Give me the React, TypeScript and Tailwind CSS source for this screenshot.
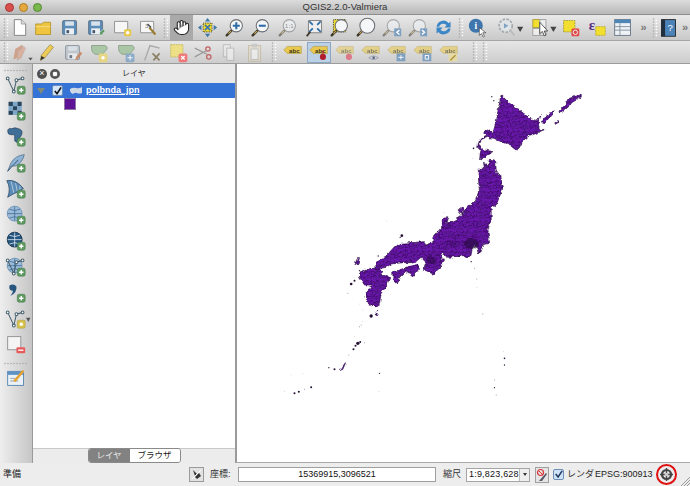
import React from 'react';
import { Hand } from 'lucide-react';

const jp = { fontFamily: '"Liberation Sans", "Noto Sans CJK JP", sans-serif' };

const Ico: React.FC<{ children: React.ReactNode; w?: number }> = ({ children, w = 24 }) => (
  <svg width={w * 0.88} height="21" viewBox={`0 0 ${w} 24`} className="shrink-0">{children}</svg>
);

const Slot: React.FC<{ w?: number; children?: React.ReactNode; className?: string }> = ({ w = 26, children, className = '' }) => (
  <div className={`flex items-center justify-center shrink-0 ${className}`} style={{ width: w }}>{children}</div>
);

const Grip: React.FC = () => (
  <svg width="6" height="20" viewBox="0 0 6 20" className="shrink-0">
    {[1, 4, 7, 10, 13, 16, 19].map(y => (
      <g key={y}><circle cx="1.5" cy={y} r="0.8" fill="#a8a8a8" /><circle cx="4.5" cy={y - 1.5} r="0.8" fill="#fff" /></g>
    ))}
  </svg>
);

const Plus: React.FC<{ x?: number; y?: number }> = ({ x = 14, y = 14 }) => (
  <g>
    <rect x={x} y={y} width="9" height="9" rx="2" fill="#5f9a63" stroke="#3f7444" strokeWidth=".6" />
    <path d={`M${x + 4.5} ${y + 2}v5M${x + 2} ${y + 4.5}h5`} stroke="#fff" strokeWidth="1.6" />
  </g>
);

const Floppy: React.FC<{ c?: string; o?: number }> = ({ c = '#5b8db8', o = 1 }) => (
  <g opacity={o}>
    <rect x="4" y="4" width="16" height="16" rx="1.5" fill={c} stroke="#46596b" strokeWidth=".7" />
    <rect x="7" y="5" width="10" height="5" fill="#d8e2ea" />
    <rect x="7" y="13" width="10" height="7" fill="#eef1f3" />
    <rect x="8.5" y="15" width="3" height="3.5" fill="#46596b" />
  </g>
);

const Page: React.FC<{ o?: number }> = ({ o = 1 }) => (
  <path d="M4 5h15v13H4z" fill="#f6f6f6" stroke="#8a8a8a" opacity={o} />
);

const Mag: React.FC<{ children?: React.ReactNode; o?: number; big?: boolean }> = ({ children, o = 1, big }) => (
  <g opacity={o}>
    <path d="M9 15L3 21" stroke="#3b3425" strokeWidth="2.6" strokeLinecap="round" />
    <path d="M8 16L5 19" stroke="#d9b65a" strokeWidth="1.2" />
    <circle cx="14" cy="10" r={big ? 8.5 : 7} fill="#f4f6f8" stroke="#6b6f73" strokeWidth="1.2" />
    {children}
  </g>
);

const Toolbar1: React.FC = () => (
  <div className="h-[26px] flex items-center pl-[3px] bg-linear-to-b from-[#e9e9e9] to-[#c9c9c9] border-b border-[#a5a5a5]">
    <Grip />
    <Slot w={22}><Ico><path d="M6 3h8l5 5v13H6z" fill="#fff" stroke="#777" /><path d="M14 3v5h5" fill="#ddd" stroke="#999" /></Ico></Slot>
    <Slot><Ico><path d="M3 8h7l2-2h8v14H3z" fill="#efc53f" stroke="#b5922c" /><path d="M3 11h17" stroke="#f8e08c" /></Ico></Slot>
    <Slot><Ico><Floppy /></Ico></Slot>
    <Slot><Ico><Floppy /><path d="M16 21l1-4 4-3 2 2-4 4z" fill="#5f9a63" stroke="#fff" strokeWidth=".5" /></Ico></Slot>
    <Slot><Ico><Page /><rect x="15" y="14" width="8" height="8" rx="1.5" fill="#e8c94b" /><circle cx="19" cy="18" r="2" fill="#fff" /></Ico></Slot>
    <Slot><Ico><Page /><text x="9" y="13" fontSize="7" fill="#777">3</text><path d="M14 12l7 8" stroke="#9a7b2b" strokeWidth="2.4" /><path d="M12 8l4 4" stroke="#444" strokeWidth="1.4" /></Ico></Slot>
    <Slot w={6} className="ml-[2px]"><Grip /></Slot>
    <Slot w={23} className="h-[25px] bg-[#a9a9a9] ml-[1px]"><Hand size={17} fill="#fff" color="#222" strokeWidth={1.5} /></Slot>
    <Slot w={29}><Ico><rect x="7" y="7" width="10" height="10" fill="#f2de2e" stroke="#222" strokeDasharray="1 1" /><path d="M12 1l3 4H9zM12 23l3-4H9zM1 12l4-3v6zM23 12l-4-3v6z" fill="#3e76a8" /><path d="M9 9l6 6M15 9l-6 6" stroke="#3e76a8" strokeWidth="2" /></Ico></Slot>
    <Slot><Ico><Mag><path d="M14 6v8M10 10h8" stroke="#2f6da6" strokeWidth="2.4" /></Mag></Ico></Slot>
    <Slot><Ico><Mag><path d="M10 10h8" stroke="#2f6da6" strokeWidth="2.4" /></Mag></Ico></Slot>
    <Slot w={28}><Ico><Mag o={0.55}><text x="14" y="12.5" fontSize="7" fill="#555" textAnchor="middle" style={jp}>1:1</text></Mag></Ico></Slot>
    <Slot w={25}><Ico><path d="M5 4h15v14H5z" fill="#eee" stroke="#777" /><path d="M6 5l4 4M19 5l-4 4M6 17l4-4M19 17l-4-4" stroke="#2f6da6" strokeWidth="2" /><path d="M7 17l-4 5" stroke="#3b3425" strokeWidth="2" /></Ico></Slot>
    <Slot w={26}><Ico><rect x="5" y="3" width="14" height="14" fill="#f2de2e" stroke="#222" strokeDasharray="1 1" /><Mag /></Ico></Slot>
    <Slot w={26}><Ico><Mag big /></Ico></Slot>
    <Slot w={26}><Ico><Mag o={0.5} /><rect x="15" y="13" width="8" height="9" fill="#7d9fc0" /><path d="M21 15l-3 2.5 3 2.5" stroke="#fff" fill="none" strokeWidth="1.5" /></Ico></Slot>
    <Slot w={26}><Ico><Mag o={0.5} /><rect x="15" y="13" width="8" height="9" fill="#7d9fc0" /><path d="M17 15l3 2.5-3 2.5" stroke="#fff" fill="none" strokeWidth="1.5" /></Ico></Slot>
    <Slot w={26}><Ico><path d="M4 11a8 8 0 0 1 14-4l2-2v7h-7l2.500-2.500A5 5 0 0 0 7 11z" fill="#3b86c6" /><path d="M20 13a8 8 0 0 1-14 4l-2 2v-7h7l-2.500 2.500A5 5 0 0 0 17 13z" fill="#3b86c6" /></Ico></Slot>
    <Slot w={8}><Grip /></Slot>
    <Slot w={26}><Ico><circle cx="10" cy="10" r="8" fill="#3f76ad" /><text x="10" y="14" fontSize="11" fontWeight="700" fill="#fff" textAnchor="middle" style={{ fontFamily: '"Liberation Serif", serif' }}>i</text><path d="M14 12v9l2.500-2 2 4 1.500-1-2-4h3.500z" fill="#fff" stroke="#333" strokeWidth=".7" /></Ico></Slot>
    <Slot w={34} className="pl-[4px]">
      <Ico w={32}><circle cx="11" cy="10" r="7.500" fill="#dfe3e6" stroke="#a5abb0" strokeWidth="2" strokeDasharray="3 1.500" /><path d="M9 7l5 3-5 3z" fill="#7da2c4" /><path d="M16 15l5 6" stroke="#bbb" strokeWidth="2" /><path d="M24 11h7l-3.500 6z" fill="#444" /></Ico>
    </Slot>
    <Slot w={32} className="pl-[6px]">
      <Ico w={30}><rect x="2" y="3" width="8" height="9" fill="#f2de2e" stroke="#a59a35" /><rect x="10" y="3" width="7" height="9" fill="#eee" stroke="#999" /><rect x="2" y="13" width="8" height="8" fill="#eee" stroke="#999" /><rect x="10" y="13" width="7" height="8" fill="#ddd" stroke="#999" /><path d="M10 6v13l3-2.500 2 5 2-1-2-4.500h4z" fill="#fff" stroke="#222" strokeWidth=".8" /><path d="M22 11h7l-3.500 6z" fill="#444" /></Ico>
    </Slot>
    <Slot w={27}><Ico><rect x="4" y="4" width="13" height="13" fill="#f2de2e" stroke="#a59a35" strokeDasharray="2 1" /><rect x="13" y="13" width="9" height="9" rx="1.500" fill="#df4a4a" /><circle cx="17.500" cy="17.500" r="2.500" fill="none" stroke="#fff" /></Ico></Slot>
    <Slot w={26}><Ico><text x="3" y="15" fontSize="17" fill="#5c2e82" fontWeight="700" style={{ fontFamily: '"Liberation Serif", serif' }}>ε</text><rect x="11" y="11" width="11" height="10" fill="#f2de2e" stroke="#b7a93a" strokeDasharray="2 1" /></Ico></Slot>
    <Slot w={25}><Ico><rect x="3" y="3" width="18" height="18" fill="#eef2f5" stroke="#607080" /><rect x="3" y="3" width="18" height="4" fill="#4f86b8" /><path d="M3 11h18M3 15h18M9 7v14" stroke="#7d8d9b" /></Ico></Slot>
    <Slot w={17} className="text-[11px] text-[#777] font-bold">»</Slot>
    <Slot w={6}><Grip /></Slot>
    <Slot w={22}><Ico><rect x="4" y="3" width="16" height="19" fill="#4b83b8" stroke="#222" /><rect x="4" y="3" width="4" height="19" fill="#1f2f40" /><text x="14" y="16" fontSize="11" fill="#fff" textAnchor="middle" style={jp}>?</text></Ico></Slot>
    <Slot w={10} className="text-[11px] text-[#777] font-bold">»</Slot>
  </div>
);

const Label: React.FC<{ children?: React.ReactNode; o?: number }> = ({ children, o = 1 }) => (
  <Ico>
    <g opacity={o}>
      <path d="M2 9l4-4h16v8H6z" fill="#e8c84f" stroke="#a78d2f" strokeWidth=".6" />
      <text x="14" y="12" fontSize="7" fontWeight="700" fill="#3a3318" textAnchor="middle" style={jp}>abc</text>
    </g>
    {children}
  </Ico>
);

const Toolbar2: React.FC = () => (
  <div className="h-[23px] flex items-center pl-[3px] bg-linear-to-b from-[#e6e6e6] to-[#cdcdcd] border-b border-[#9c9c9c]">
    <Grip />
    <Slot w={24}><Ico w={28}><g opacity=".7"><path d="M5 20l2-12 8-5 1 2-5 12z" fill="#c98b6a" /><path d="M9 21l1-10 7-6 2 2-5 11z" fill="#d8a088" stroke="#999" strokeWidth=".4" /></g><path d="M22 18h5l-2.500 3z" fill="#555" /></Ico></Slot>
    <Slot w={24} className="ml-[2px]"><Ico><path d="M5 21l1-6 10-12 4 3L10 18z" fill="#eecb56" stroke="#8a7a40" strokeWidth=".7" /><path d="M5 21l1-5 4 2z" fill="#333" /></Ico></Slot>
    <Slot w={28}><Ico><Floppy c="#b8c0c7" o={0.75} /><path d="M15 21l1-4 5-6 2 2-5 6z" fill="#c98b6a" /></Ico></Slot>
    <Slot w={26}><Ico><path d="M3 4h14c5 0 4 5 2 6s-2 4-4 4H8C4 14 2 8 3 4z" fill="#a9c7a6" stroke="#8a9e88" /><rect x="11" y="13" width="10" height="10" rx="1.500" fill="#e6d583" /><circle cx="16" cy="18" r="2" fill="#fff" /></Ico></Slot>
    <Slot w={27}><Ico><path d="M3 4h14c5 0 4 5 2 6s-2 4-4 4H8C4 14 2 8 3 4z" fill="#a9c7a6" stroke="#8a9e88" /><rect x="11" y="13" width="10" height="10" rx="1.500" fill="#8cabc8" /><path d="M13 18h6M16 15v6" stroke="#fff" /></Ico></Slot>
    <Slot w={26}><Ico><path d="M3 21L9 4l11 3" fill="none" stroke="#a6a6a6" strokeWidth="1.500" /><path d="M12 13l8 8M20 13l-7 8" stroke="#8a7e64" strokeWidth="1.800" /></Ico></Slot>
    <Slot w={26}><Ico><rect x="3" y="3" width="14" height="14" fill="#ecdf85" stroke="#c5b95c" strokeDasharray="2 1" /><rect x="12" y="13" width="10" height="10" rx="2" fill="#e77" /><path d="M15 16l4 4M19 16l-4 4" stroke="#fff" strokeWidth="1.500" /></Ico></Slot>
    <Slot w={24}><Ico><circle cx="17" cy="8" r="2.500" fill="none" stroke="#c06060" strokeWidth="1.400" /><circle cx="18" cy="17" r="2.500" fill="none" stroke="#c06060" strokeWidth="1.400" /><path d="M2 7l14 7M2 17l13-7" stroke="#999" strokeWidth="1.400" /></Ico></Slot>
    <Slot w={26}><Ico><g opacity=".55"><path d="M6 3h8v14H6z" fill="#eee" stroke="#999" /><path d="M10 7h8v14h-8z" fill="#f6f6f6" stroke="#999" /></g></Ico></Slot>
    <Slot w={26}><Ico><g opacity=".6"><rect x="5" y="4" width="14" height="18" fill="#e7dcc4" stroke="#b5a88a" /><rect x="8" y="8" width="8" height="12" fill="#f7f7f7" stroke="#aaa" /><rect x="9" y="2" width="6" height="4" fill="#bbb" /></g></Ico></Slot>
    <Slot w={12}><Grip /></Slot>
    <Slot w={25}><Label /></Slot>
    <Slot w={27}><div className="w-[24px] h-[21px] flex items-center justify-center bg-[#bcd0e6] border border-[#8aa7c7] overflow-hidden"><Label><circle cx="17" cy="17" r="3.500" fill="#b01e2e" /><path d="M17 13v-3" stroke="#b01e2e" strokeWidth="1.500" /></Label></div></Slot>
    <Slot w={26}><Label o={0.5}><circle cx="17" cy="17" r="3.500" fill="#d78" /></Label></Slot>
    <Slot w={26}><Label o={0.6}><path d="M10 18q5-4 11 0q-6 4-11 0z" fill="#cdd8e2" stroke="#778" strokeWidth=".6" /><circle cx="15.500" cy="18" r="1.500" fill="#567" /></Label></Slot>
    <Slot w={26}><Label o={0.6}><rect x="12" y="13" width="10" height="9" fill="#7d9fc0" /><path d="M14 17.500h6M17 15v5" stroke="#fff" /></Label></Slot>
    <Slot w={26}><Label o={0.6}><rect x="12" y="13" width="10" height="9" fill="#7d9fc0" /><rect x="15" y="15.500" width="4" height="4" fill="none" stroke="#fff" /></Label></Slot>
    <Slot w={26}><Label o={0.6}><rect x="12" y="13" width="10" height="9" fill="#e5d9a5" /><path d="M14 21l6-6" stroke="#a68b2c" strokeWidth="1.500" /></Label></Slot>
    <Slot w={12} className="ml-[7px]"><Grip /></Slot>
    <Slot w={8}><Grip /></Slot>
  </div>
);

const HGrip: React.FC = () => (
  <svg width="24" height="5" viewBox="0 0 24 5" className="shrink-0">
    {[1, 4, 7, 10, 13, 16, 19, 22].map(x => <circle key={x} cx={x} cy="2.500" r=".8" fill="#a8a8a8" />)}
  </svg>
);

const Globe: React.FC<{ dark?: boolean }> = ({ dark }) => (
  <g>
    <circle cx="11" cy="11" r="8.500" fill={dark ? '#24557f' : '#9dbbd8'} stroke={dark ? '#15324c' : '#6e93b5'} />
    <path d="M3 11h16M11 3v16M5 6q6 3 12 0M5 16q6-3 12 0" stroke={dark ? '#e6eef5' : '#3f6d96'} fill="none" strokeWidth=".9" />
  </g>
);

const VNode: React.FC = () => (
  <g fill="none" stroke="#46606f" strokeWidth="1.200">
    <path d="M3 5l7 15 3-13 7-2" />
    <circle cx="3" cy="5" r="1.600" fill="#fff" /><circle cx="10" cy="20" r="1.600" fill="#fff" /><circle cx="13" cy="7" r="1.600" fill="#fff" /><circle cx="20" cy="5" r="1.600" fill="#fff" />
  </g>
);

const LeftToolbar: React.FC = () => (
  <div className="w-[33px] shrink-0 flex flex-col items-center bg-linear-to-r from-[#eeeeee] to-[#c6c6c6] border-r border-[#9a9a9a] pt-[4px]">
    <HGrip />
    <div className="flex flex-col items-center gap-[5px] pt-[1px]">
      <Ico><VNode /><Plus /></Ico>
      <Ico><g fill="#27445f"><rect x="4" y="2" width="5" height="5" /><rect x="14" y="2" width="5" height="5" /><rect x="9" y="7" width="5" height="5" /><rect x="4" y="12" width="5" height="5" /><rect x="14" y="12" width="5" height="5" /></g><g fill="#7ea6c9"><rect x="9" y="2" width="5" height="5" /><rect x="4" y="7" width="5" height="5" /><rect x="14" y="7" width="5" height="5" /><rect x="9" y="12" width="5" height="5" /></g><Plus /></Ico>
      <Ico><path d="M3 6q0-4 5-3 3-2 7 0 6 1 4 7-2 4-4 5l-1 4-3-2V10H7Q3 10 3 6z" fill="#3f6f99" stroke="#1f3a52" strokeWidth=".7" /><Plus /></Ico>
      <Ico><path d="M3 22L7 12Q12 4 22 3 20 12 12 16L7 16z" fill="#8fb3d4" stroke="#335a7c" strokeWidth=".7" /><path d="M3 22L15 9" stroke="#2e4f6d" /><Plus /></Ico>
      <Ico><path d="M2 3q10-2 19 9l-5 3Q9 18 3 22 7 12 2 3z" fill="#5d8cb7" stroke="#1e3f5c" strokeWidth=".8" /><path d="M7 4l3 13M12 6l2 9M17 9l0 5" stroke="#cfe0ee" strokeWidth=".8" /><Plus /></Ico>
      <Ico><Globe /><Plus /></Ico>
      <Ico><Globe dark /><Plus /></Ico>
      <Ico><Globe /><VNode /><Plus /></Ico>
      <Ico><path d="M5 4q5-3 8 1 1 7-7 11 3-3 3-6-5 0-4-6z" fill="#27557d" /><Plus /></Ico>
      <div className="pl-[5px]"><Ico w={30}><VNode /><rect x="14" y="14" width="9" height="9" rx="1.500" fill="#d8c34a" stroke="#a89a3a" strokeWidth=".6" /><circle cx="18.500" cy="18.500" r="2" fill="#fff" /><path d="M24 11h5l-2.500 5z" fill="#555" /></Ico></div>
      <Ico><rect x="3" y="3" width="15" height="15" fill="#f4f4f4" stroke="#8c8c8c" /><rect x="13" y="15" width="10" height="7" rx="1.500" fill="#e75a5a" /><path d="M15 18.500h6" stroke="#fff" strokeWidth="1.500" /></Ico>
    </div>
    <div className="mt-[6px]"><HGrip /></div>
    <div className="mt-[1px]">
      <Ico><rect x="3" y="5" width="18" height="16" fill="#eaf1f7" stroke="#4f80ad" /><rect x="3" y="5" width="18" height="4" fill="#5d93c4" /><path d="M6 13h6M6 16h9" stroke="#8a9ba9" /><path d="M9 16L20 3l2 2-10 12z" fill="#e7a434" /></Ico>
    </div>
  </div>
);

const LayerPanel: React.FC = () => (
  <div className="w-[202px] shrink-0 flex flex-col bg-white">
    <div className="h-[19px] flex items-center pl-[2px] bg-[#e9e9e9]">
      <div className="w-[10px] h-[10px] rounded-full bg-[#4f4f4f] flex items-center justify-center text-white text-[9px] leading-none ml-[2px]">×</div>
      <div className="w-[10px] h-[10px] rounded-full bg-[#6a6a6a] border-2 border-[#555] ml-[3px] flex items-center justify-center">
        <div className="w-[4px] h-[4px] bg-white rounded-[1px]" />
      </div>
      <div className="flex-1 text-center text-[8px] text-[#333] pr-[27px] whitespace-nowrap" style={jp}>レイヤ</div>
    </div>
    <div className="h-[15px] flex items-center bg-[#3673d6]">
      <div className="ml-[4px] w-0 h-0 border-x-[4px] border-x-transparent border-t-[6px] border-t-[#7f8a78]" />
      <div className="ml-[7px] w-[11px] h-[11px] rounded-[2px] bg-[#d5e5f8] border border-[#6d8fb8] flex items-center justify-center">
        <svg width="10" height="10" viewBox="0 0 10 10"><path d="M2 5l2.500 3L9 1" stroke="#111" strokeWidth="1.800" fill="none" /></svg>
      </div>
      <svg width="14" height="10" viewBox="0 0 14 10" className="ml-[6px]"><path d="M1 3q3-2 6-1t6-1v6q-3 1-5 0t-4 1Q2 8 1 5z" fill="#cfd9e6" /></svg>
      <span className="ml-[3px] text-[9px] font-bold text-white underline leading-none" style={jp}>polbnda_jpn</span>
    </div>
    <div className="pl-[31px] flex-1">
      <div className="w-[12px] h-[12px] bg-[#5f1296] border border-[#8d7aa0]" />
    </div>
    <div className="h-[15px] bg-[#ececec] border-t border-[#c8c8c8] flex justify-center">
      <div className="flex h-[15px] -mt-px text-[8.500px] leading-[13px] rounded-[3px] overflow-hidden border border-[#8a8a8a] whitespace-nowrap" style={jp}>
        <div className="w-[41px] text-center bg-[#828282] text-[#e8e8e8]">レイヤ</div>
        <div className="w-[50px] text-center bg-white text-[#222]">ブラウザ</div>
      </div>
    </div>
  </div>
);

const holes: [number, number, number][] = [
  [235, 790, 5], [228, 797, 3], [242, 786, 3], [148, 863, 2], [165, 868, 3], [222, 808, 3], [208, 825, 1.5], [255, 788, 1.5],
  [240, 740, 1.5], [245, 735, 1.5], [250, 725, 1], [225, 770, 1], [240, 672, 1], [255, 650, 1.5], [250, 690, 1], [270, 690, 1],
  [275, 708, 5], [45, 940, 3], [58, 935, 3], [95, 922, 3], [75, 928, 1.5], [35, 885, 1], [15, 935, 1], [70, 880, 1], [300, 880, 2],
  [298, 935, 1], [675, 835, 2.5], [675, 855, 2], [673, 815, 1], [645, 900, 1.5], [645, 923, 2], [650, 945, 1.5], [575, 545, 2],
  [585, 565, 1.5], [592, 597, 1.5], [592, 622, 1], [610, 702, 1.5], [215, 612, 4], [225, 602, 3], [205, 640, 1.5], [637, 50, 2],
  [643, 62, 2], [648, 97, 1], [582, 205, 2.5], [578, 235, 1], [367, 467, 4], [362, 472, 2], [322, 423, 1], [493, 397, 1], [240, 572, 2], [296, 528, 2],
];

const JapanMap: React.FC = () => (
  <svg viewBox="238 64 452 398" className="w-full h-full block blur-[0.3px]">
    <defs>
      <pattern id="muni" width="34" height="30" patternUnits="userSpaceOnUse">
        <rect width="34" height="30" fill="#6a14ac" />
        <path d="M0 6L7 3 14 8 22 4 34 7M7 3V0M14 8l-2 9 8 3 9-4 5 1M14 8l6 3 2-7M20 20l-3 10M12 17L3 14 0 18M3 14L7 3M29 16l-3-9M3 14l2 9 12 0M5 23L0 26M29 16l-1 8-8 6M28 24l6 1" fill="none" stroke="#2f0c50" strokeWidth="1.600" />
      </pattern>
      <filter id="rough" x="-5%" y="-5%" width="110%" height="110%">
        <feTurbulence type="fractalNoise" baseFrequency="0.07" numOctaves="3" seed="4" result="n" />
        <feDisplacementMap in="SourceGraphic" in2="n" scale="14" xChannelSelector="R" yChannelSelector="G" />
      </filter>
    </defs>
    <g transform="translate(280 80) scale(0.33333)">
      <g fill="url(#muni)" stroke="#2b0d45" strokeWidth="2" strokeLinejoin="round" filter="url(#rough)">
        <path d="M665 45L690 70 720 90 750 115 772 122 785 105 775 130 782 150 797 148 770 160 745 170 722 192 712 212 690 195 665 185 640 175 625 172 604 180 597 195 610 208 640 215 625 222 612 236 600 236 605 210 595 200 600 180 622 168 612 155 625 150 640 160 650 125 655 95z" />
        <path d="M905 44L885 50 870 55 860 72 838 94 846 96 880 66 905 52z" />
        <path d="M825 96L805 100 787 128 795 131 815 105z" />
        <path d="M836 125L826 128 828 133 836 130z" />
        <path d="M630 238L648 240 650 270 660 285 665 310 670 325 660 350 650 375 635 385 635 420 625 450 630 490 610 495 600 522 595 505 590 495 575 505 570 530 560 535 550 525 530 530 505 532 490 522 480 540 495 540 480 565 460 582 440 572 432 570 440 548 425 532 405 548 370 548 335 552 320 562 290 567 288 545 320 528 345 500 365 490 435 485 440 495 460 488 460 473 485 443 505 430 540 412 560 388 585 365 600 330 597 300 600 270 615 265 612 245 625 262z" />
        <path d="M488 420L505 410 500 430 512 440 490 448z" />
        <path d="M340 576L370 566 400 552 416 555 416 570 400 590 380 576 365 590 350 610 340 600z" />
        <path d="M240 580L270 565 300 565 310 585 330 595 320 620 305 640 300 670 285 680 265 670 262 640 275 615 255 615 240 592z" />
        <path d="M545 380L552 380 548 398 540 398z" />
        <path d="M233 533L240 533 234 555 228 552z" />
        <path d="M180 872L198 848 190 868z" />
        <path d="M287 708L295 690 292 706z" />
        <ellipse cx="575" cy="490" rx="22" ry="16" fill="#1c0a2e" opacity=".55" stroke="none" />
        <ellipse cx="455" cy="540" rx="16" ry="12" fill="#1c0a2e" opacity=".45" stroke="none" />
        <ellipse cx="520" cy="490" rx="24" ry="10" fill="#1c0a2e" opacity=".2" stroke="none" />
      </g>
      <path d="M338 560L370 556 408 548 425 541 430 546 400 556 360 564 340 569z" fill="#fff" />
      <g fill="#241033">
        {holes.map(([x, y, r]) => <circle key={`${x}-${y}`} cx={x} cy={y} r={r} opacity={r < 1.6 ? 0.5 : 1} />)}
      </g>
    </g>
  </svg>
);

const StatusBar: React.FC = () => (
  <div className="h-[23px] shrink-0 flex items-center bg-[#ededed] text-[9px] text-[#222] whitespace-nowrap relative" style={jp}>
    <span className="ml-[3px] w-[186px]">準備</span>
    <div className="w-[15px] h-[15px] bg-[#e2e2e2] border border-[#9a9a9a] flex items-center justify-center">
      <svg width="13" height="13" viewBox="0 0 13 13"><path d="M3 2l4 4-2 2zM9 5l2 3-4 3-2-2z" fill="#333" /><path d="M2 11L11 2" stroke="#fff" /></svg>
    </div>
    <span className="ml-[6px] w-[28px] text-[#333]">座標:</span>
    <div className="w-[198px] h-[15px] bg-white border border-[#9f9f9f] text-center leading-[13px] text-[#111]">15369915,3096521</div>
    <span className="ml-[7px] w-[23px] text-[#333]">縮尺</span>
    <div className="w-[64px] h-[14px] bg-white border border-[#a5a5a5] flex items-center pl-[2px] leading-none text-[#111] tracking-[.2px]">
      <span className="flex-1">1:9,823,628</span>
      <div className="w-[10px] h-full border-l border-[#bbb] bg-[#eee] flex items-center justify-center">
        <div className="w-0 h-0 border-x-[2px] border-x-transparent border-t-[3px] border-t-[#333]" />
      </div>
    </div>
    <div className="ml-[5px] w-[14px] h-[16px] bg-[#e4e4e4] border border-[#a0a0a0] flex items-center justify-center">
      <svg width="12" height="14" viewBox="0 0 12 14"><circle cx="4.500" cy="4.500" r="3" fill="none" stroke="#d33" strokeWidth="1.200" /><path d="M2 2l5 5" stroke="#d33" /><path d="M3 13l7-8 1 1-5 7z" fill="#556" /></svg>
    </div>
    <div className="ml-[4px] w-[11px] h-[11px] rounded-[2px] bg-[#cfe2f7] border border-[#6d8fb8] flex items-center justify-center">
      <svg width="11" height="11" viewBox="0 0 11 11"><path d="M2 5l3 3.500L10 1" stroke="#1d3a5e" strokeWidth="1.800" fill="none" /></svg>
    </div>
    <span className="ml-[3px] w-[28px] text-[#333]">レンダ</span>
    <span className="w-[61px]">EPSG:900913</span>
    <div className="w-[21px] h-[21px] rounded-full border-2 border-[#e01010] flex items-center justify-center">
      <svg width="13" height="13" viewBox="0 0 13 13"><circle cx="6.500" cy="6.500" r="4.500" fill="none" stroke="#444" strokeWidth="2.200" /><path d="M6.500 0v13M0 6.500h13" stroke="#444" strokeWidth="1.400" /><circle cx="6.500" cy="6.500" r="1.800" fill="#ccc" /></svg>
    </div>
    <svg width="10" height="10" viewBox="0 0 10 10" className="absolute right-0 bottom-0"><path d="M1 10L10 1M4 10l6-6M7 10l3-3" stroke="#999" /></svg>
  </div>
);

export default function App() {
  return (
    <div className="w-[690px] h-[486px] flex flex-col overflow-hidden bg-[#ededed]" style={jp}>
      <div className="h-[15px] shrink-0 flex items-center bg-linear-to-b from-[#dcdcdc] to-[#b8b8b8] border-b border-[#8e8e8e]">
        <div className="flex gap-[5px] pl-[5px]">
          <div className="w-[9px] h-[9px] rounded-full bg-[#d8504c] border border-[#a33]" />
          <div className="w-[9px] h-[9px] rounded-full bg-[#e3a83f] border border-[#b07f22]" />
          <div className="w-[9px] h-[9px] rounded-full bg-[#78b84e] border border-[#538a2f]" />
        </div>
        <div className="flex-1 text-center text-[9.500px] text-[#333] pr-[42px] leading-none">QGIS2.2.0-Valmiera</div>
      </div>
      <Toolbar1 />
      <Toolbar2 />
      <div className="flex-1 min-h-0 flex">
        <LeftToolbar />
        <LayerPanel />
        <div className="flex-1 min-w-0 bg-white border-l-2 border-[#9a9a9a] border-b border-b-[#aaa]">
          <JapanMap />
        </div>
      </div>
      <StatusBar />
    </div>
  );
}
